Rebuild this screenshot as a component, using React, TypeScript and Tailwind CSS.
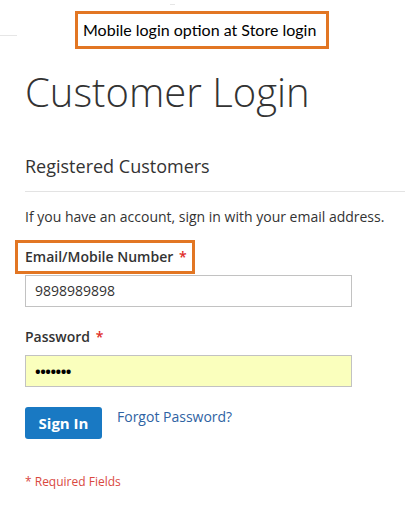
import React from 'react';

const App: React.FC = () => {
    return (
        <div
            className="relative w-[405px] h-[511px] overflow-hidden bg-white text-[#333333]"
            style={{ fontFamily: '"Open Sans", "Liberation Sans", sans-serif' }}
        >
            {/* faint marks from the cropped page above */}
            <div className="absolute left-0 top-[35px] h-px w-[17px] bg-[#e6e6e6]" />
            <div className="absolute left-[170px] top-[4px] h-px w-[5px] bg-[#e6e6e6]" />

            {/* annotation */}
            <div className="ml-[75px] mt-[11px] flex h-[38px] w-[254px] items-center border-[3px] border-[#e27623] pl-[5px]">
                <span className="text-[16px] text-black" style={{ fontFamily: 'Lato, "Liberation Sans", sans-serif' }}>
                    Mobile login option at Store login
                </span>
            </div>

            <div className="pl-[25px]">
                <h1 className="mt-[18.5px] h-[48px] text-[40px] font-light leading-[48px]">Customer Login</h1>

                <div className="mt-[38.5px] border-b border-[#e3e3e3] pb-[13px]">
                    <h2 className="text-[18px] font-normal leading-[24px]">Registered Customers</h2>
                </div>

                <p className="mt-[14.6px] text-[14px] leading-[20px]">
                    If you have an account, sign in with your email address.
                </p>

                <div className="relative mt-[20px] text-[14px] font-semibold leading-[20px]">
                    Email/Mobile Number <span className="ml-[2px] text-[#e02b27]">*</span>
                    <div className="absolute left-[-10px] top-[-6.6px] h-[34px] w-[180px] border-[3px] border-[#e27623]" />
                </div>
                <div className="mt-[8.4px] flex h-[32px] w-[327px] items-center border border-[#c2c2c2] px-[9px] text-[14px]">
                    9898989898
                </div>

                <div className="mt-[19.6px] text-[14px] font-semibold leading-[20px]">
                    Password <span className="ml-[2px] text-[#e02b27]">*</span>
                </div>
                <div className="mt-[8.4px] flex h-[32px] w-[327px] items-center border border-[#c2c2c2] bg-[#faffbd] px-[9px] text-[15px] font-bold tracking-[-0.5px] text-black">
                    •••••••
                </div>

                <div className="mt-[20px] flex items-start gap-[15px]">
                    <button className="h-[32px] w-[77px] rounded-[3px] bg-[#1979c3] text-[15px] font-bold text-white">
                        Sign In
                    </button>
                    <a className="text-[14px] leading-[20px] text-[#2f63a3]">Forgot Password?</a>
                </div>

                <div className="mt-[35.3px] text-[12px] leading-[16px] text-[#d9493f]">* Required Fields</div>
            </div>
        </div>
    );
};

export default App;
